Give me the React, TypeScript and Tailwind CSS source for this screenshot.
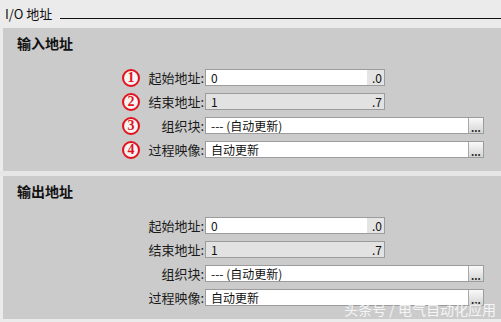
import React from "react";

const font = { fontFamily: '"Noto Sans CJK SC", "Noto Sans", sans-serif' };

type Row = {
  num?: string;
  label: string;
  value: string;
  kind: "bit" | "browse";
  suffix?: string;
  disabled?: boolean;
};

function Field({ row }: { row: Row }) {
  if (row.kind === "bit") {
    return (
      <div
        className={`flex h-[17px] w-[180px] border border-[#9c9c9c] ${
          row.disabled ? "bg-[#e2e2e2]" : "bg-white"
        }`}
      >
        <div className="flex-1 pl-[5px] text-[12px] leading-[15px] text-[#111]">{row.value}</div>
        <div
          className={`w-[17px] pr-[2px] text-right text-[12px] leading-[15px] text-[#111] ${
            row.disabled ? "bg-[#e2e2e2]" : "bg-[#e4e4e4]"
          }`}
        >
          {row.suffix}
        </div>
      </div>
    );
  }
  return (
    <div className="flex h-[17px] w-[279px] border border-[#9c9c9c] bg-white">
      <div className="flex-1 pl-[5px] text-[12px] leading-[15px] text-[#111]">{row.value}</div>
      <div className="relative w-[15px] border-l border-[#a8a8a8] bg-gradient-to-b from-[#fafafa] to-[#d4d4d4]">
        <span className="absolute bottom-[1px] left-[2px] text-[10px] font-bold leading-[8px] text-[#222]">...</span>
      </div>
    </div>
  );
}

function Section({ title, rows }: { title: string; rows: Row[] }) {
  return (
    <div className="ml-[3px] bg-[#cbcbcb] pb-[13px]">
      <div className="pl-[14px] pt-[5px] text-[14px] font-bold leading-[20px] text-[#111]">{title}</div>
      <div className="mt-[16px] flex flex-col gap-[7px]">
        {rows.map((r) => (
          <div key={r.label} className="flex h-[17px] items-center">
            <div className="w-[119px]" />
            <div className="flex w-[21px] justify-start">
              {r.num && (
                <span
                  className="flex h-[18px] w-[18px] items-center justify-center rounded-full border-2 border-[#e3101a] bg-[#f4f4f4] text-[14px] font-bold leading-none text-[#e3101a]"
                  style={{ fontFamily: '"Liberation Serif", serif' }}
                >
                  {r.num}
                </span>
              )}
            </div>
            <div className="w-[61px] text-right text-[13px] leading-[17px] text-[#1a1a1a]">{r.label}</div>
            <div className="w-[1px]" />
            <Field row={r} />
          </div>
        ))}
      </div>
    </div>
  );
}

export default function App() {
  const input: Row[] = [
    { num: "1", label: "起始地址:", value: "0", kind: "bit", suffix: ".0" },
    { num: "2", label: "结束地址:", value: "1", kind: "bit", suffix: ".7", disabled: true },
    { num: "3", label: "组织块:", value: "--- (自动更新)", kind: "browse" },
    { num: "4", label: "过程映像:", value: "自动更新", kind: "browse" },
  ];
  const output: Row[] = input.map((r) => ({ ...r, num: undefined }));

  return (
    <div className="relative h-[322px] w-[501px] overflow-hidden bg-[#ebebeb]" style={font}>
      <div className="flex h-[28px] items-start">
        <div className="pl-[5px] pt-[5px] text-[13px] leading-[18px] text-[#111]">I/O 地址</div>
        <div className="ml-[8px] mt-[18px] h-px flex-1 bg-[#111]" />
      </div>
      <Section title="输入地址" rows={input} />
      <div className="h-[5px] bg-[#e6e6e6]" />
      <Section title="输出地址" rows={output} />
      <div className="absolute bottom-[5px] right-[5px] text-[14px] leading-[16px] text-white/80">
        头条号 / 电气自动化应用
      </div>
    </div>
  );
}
